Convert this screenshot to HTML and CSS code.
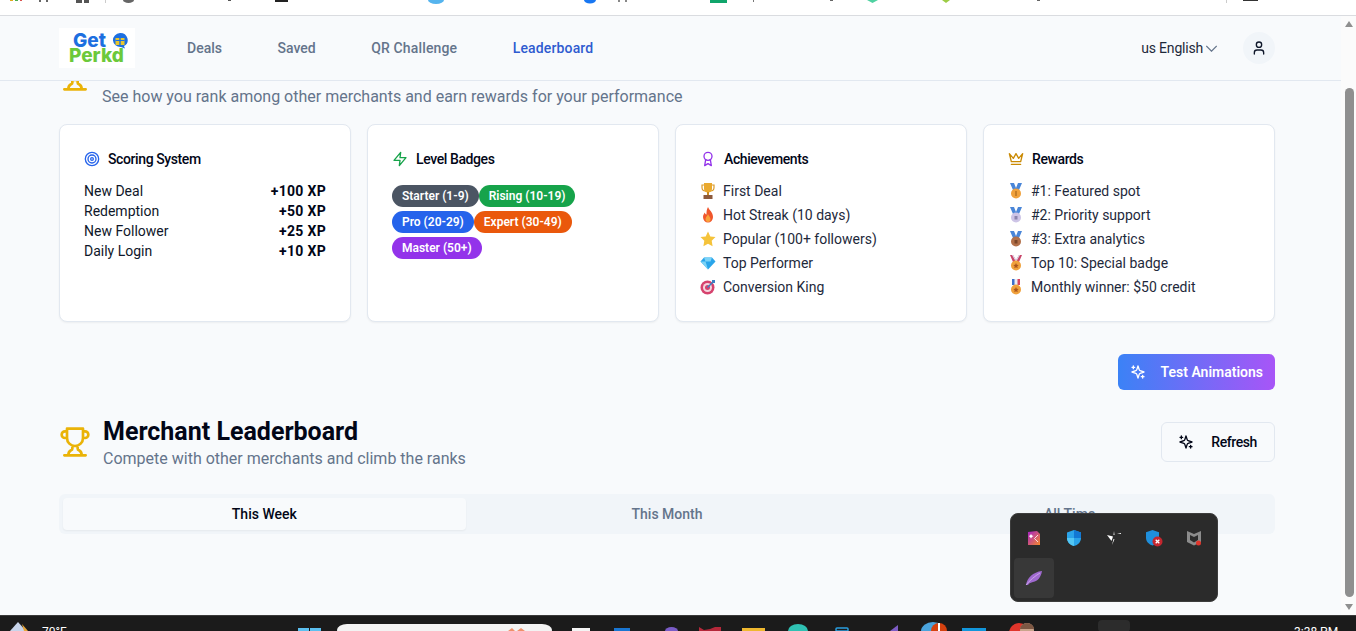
FILE: index.html
```html
<!DOCTYPE html>
<html lang="en">
<head>
    <meta charset="UTF-8">
    <meta name="viewport" content="width=device-width, initial-scale=1.0">
    <title>GetPerkd - Leaderboard</title>
    <link rel="stylesheet" href="styles.css">
</head>
<body>

<div class="screen">
    <!-- bottom edge of the browser toolbar -->
    <div class="browser-strip">
        <svg width="1356" height="15" viewBox="0 0 1356 15">
            <rect x="10" y="0" width="3" height="1" fill="#e0a81c"/><rect x="15" y="0" width="3" height="1" fill="#4caf50"/><rect x="20" y="0" width="2" height="1" fill="#d9534f"/>
            <rect x="39" y="0" width="2" height="2" fill="#666"/><rect x="46" y="0" width="2" height="2" fill="#666"/>
            <rect x="76" y="0" width="6" height="3" fill="#555"/><rect x="84" y="0" width="5" height="3" fill="#555"/>
            <rect x="105" y="0" width="1" height="3" fill="#ccc"/>
            <path d="M123 0h11a5.500 3 0 0 1-11 0z" fill="#666"/>
            <rect x="228" y="0" width="3" height="1" fill="#555"/>
            <rect x="275" y="0" width="13" height="2" fill="#222"/>
            <path d="M428 0h16a8 4 0 0 1-16 0z" fill="#55b4ee"/>
            <path d="M584 0h12a6 3.500 0 0 1-12 0z" fill="#1877f2"/>
            <rect x="618" y="0" width="2" height="2" fill="#888"/><rect x="625" y="0" width="2" height="2" fill="#888"/>
            <rect x="710" y="0" width="17" height="3" fill="#10a56b"/>
            <rect x="753" y="0" width="1" height="2" fill="#777"/>
            <rect x="830" y="0" width="3" height="1" fill="#666"/>
            <path d="M867 0h11l-5.500 3z" fill="#4fd1a1"/>
            <path d="M942 0h8l-4 3z" fill="#9ccc45"/>
            <rect x="1037" y="0" width="3" height="1" fill="#666"/>
            <rect x="1226" y="0" width="1" height="3" fill="#ccc"/>
            <rect x="1243" y="0" width="15" height="1" fill="#333"/>
        </svg>
    </div>

    <div class="viewport">
        <div class="page">
            <nav class="navbar">
                <div class="nav-left">
                    <div class="logo">
                        <div class="logo-top">
                            <span class="logo-get">Get</span>
                            <svg width="16" height="16" viewBox="0 0 16 16">
                                <path d="M8 0a7.500 7 0 0 1 4 13l1 2.500-4-1.500A7.500 7 0 1 1 8 0z" fill="#1d6fe0"/>
                                <rect x="3.500" y="5" width="9" height="7" fill="#e8c62e"/>
                                <rect x="7.300" y="3" width="1.400" height="9" fill="#1d6fe0"/>
                                <rect x="3.500" y="7" width="9" height="1" fill="#1d6fe0"/>
                            </svg>
                        </div>
                        <span class="logo-perkd">Perkd</span>
                    </div>
                    <a class="nav-link" href="#">Deals</a>
                    <a class="nav-link" href="#">Saved</a>
                    <a class="nav-link nav-wide" href="#">QR Challenge</a>
                    <a class="nav-link nav-active" href="#">Leaderboard</a>
                </div>
                <div class="nav-right">
                    <div class="lang">
                        <span>us English</span>
                        <svg class="lang-arrow" width="11" height="7" viewBox="6 8 12 8" fill="none" stroke="#64748b" stroke-width="1.500"><path d="m6 9 6 6 6-6"/></svg>
                    </div>
                    <div class="avatar">
                        <svg width="16" height="16" viewBox="0 0 24 24" fill="none" stroke="#0f172a" stroke-width="2" stroke-linecap="round" stroke-linejoin="round"><circle cx="12" cy="7" r="4"/><path d="M19 21v-2a4 4 0 0 0-4-4H9a4 4 0 0 0-4 4v2"/></svg>
                    </div>
                </div>
            </nav>

            <main class="content">
                <div class="rank-head">
                    <svg class="trophy trophy-top" viewBox="0 0 24 24"><use href="#trophy"/></svg>
                    <p class="subtitle">See how you rank among other merchants and earn rewards for your performance</p>
                </div>

                <div class="cards">
                    <section class="card">
                        <h3 class="card-title">
                            <svg class="card-icon" viewBox="0 0 24 24" stroke="#2563eb"><circle cx="12" cy="12" r="10"/><circle cx="12" cy="12" r="6"/><circle cx="12" cy="12" r="2"/></svg>
                            Scoring System
                        </h3>
                        <ul class="score-list">
                            <li><span>New Deal</span><b>+100 XP</b></li>
                            <li><span>Redemption</span><b>+50 XP</b></li>
                            <li><span>New Follower</span><b>+25 XP</b></li>
                            <li><span>Daily Login</span><b>+10 XP</b></li>
                        </ul>
                    </section>

                    <section class="card">
                        <h3 class="card-title">
                            <svg class="card-icon" viewBox="0 0 24 24" stroke="#16a34a"><polygon points="13 2 3 14 12 14 11 22 21 10 12 10 13 2"/></svg>
                            Level Badges
                        </h3>
                        <div class="badges">
                            <span class="badge badge-gray">Starter (1-9)</span>
                            <span class="badge badge-green">Rising (10-19)</span>
                            <span class="badge badge-blue">Pro (20-29)</span>
                            <span class="badge badge-orange">Expert (30-49)</span>
                            <span class="badge badge-purple">Master (50+)</span>
                        </div>
                    </section>

                    <section class="card">
                        <h3 class="card-title">
                            <svg class="card-icon" viewBox="0 0 24 24" stroke="#9333ea"><circle cx="12" cy="8" r="6"/><path d="M15.477 12.890 17 22l-5-3-5 3 1.523-9.110"/></svg>
                            Achievements
                        </h3>
                        <ul class="emoji-list">
                            <li>
                                <svg class="emoji" viewBox="0 0 16 16"><path d="M2 2h12v2.500a3.500 3.500 0 0 1-3.500 3.500h-5A3.500 3.500 0 0 1 2 4.500z" fill="none" stroke="#d99a2b" stroke-width="1.200"/><path d="M4 0h8v5.500a4 4 0 0 1-8 0z" fill="#eaa92e"/><rect x="7" y="9" width="2" height="3" fill="#c98a20"/><rect x="3.500" y="12" width="9" height="4" fill="#8d5a3c"/></svg>
                                First Deal
                            </li>
                            <li>
                                <svg class="emoji" viewBox="0 0 16 16"><path d="M8 0c1 3 5 5 5 10a5 5.500 0 0 1-10 0c0-2 1-3.500 2-4.500 0 1 .5 2 1.500 2C6.500 5 6.500 2.500 8 0z" fill="#f0562c"/><path d="M8 7c.5 2 2.500 3 2.500 5a2.500 3 0 0 1-5 0c0-2 2-3 2.500-5z" fill="#f9a13a"/></svg>
                                Hot Streak (10 days)
                            </li>
                            <li>
                                <svg class="emoji" viewBox="0 0 16 16"><path d="m8 .5 2.300 4.900 5.200.7-3.800 3.700.9 5.400L8 12.700l-4.600 2.500.9-5.400L.5 6.100l5.200-.7z" fill="#f5c33b"/></svg>
                                Popular (100+ followers)
                            </li>
                            <li>
                                <svg class="emoji" viewBox="0 0 16 16"><path d="M4 2.500h8l3.500 4L8 14.500.5 6.500z" fill="#29a5ea"/><path d="M4 2.500h8l-1.500 4h-5zM.5 6.500h5L8 14.500z" fill="#7bd3f7"/></svg>
                                Top Performer
                            </li>
                            <li>
                                <svg class="emoji" viewBox="0 0 16 16"><circle cx="7.500" cy="8.500" r="7" fill="#d6436e"/><circle cx="7.500" cy="8.500" r="4.500" fill="#f4d6de"/><circle cx="7.500" cy="8.500" r="2.500" fill="#d6436e"/><path d="m7.500 8.500 6-6" stroke="#3b82c4" stroke-width="1.500"/><path d="M12 1h3v3h-2l-1-1z" fill="#3b82c4"/></svg>
                                Conversion King
                            </li>
                        </ul>
                    </section>

                    <section class="card">
                        <h3 class="card-title">
                            <svg class="card-icon" viewBox="0 0 24 24" stroke="#ca8a04"><path d="m2 4 3 12h14l3-12-6 7-4-7-4 7-6-7zm3 16h14"/></svg>
                            Rewards
                        </h3>
                        <ul class="emoji-list">
                            <li>
                                <svg class="emoji" viewBox="0 0 16 16"><path d="M2 0h4l2 5 2-5h4l-3 7H5z" fill="#4a86d8"/><circle cx="8" cy="10.500" r="5" fill="#f0a13c"/><rect x="7.400" y="8" width="1.200" height="5" fill="#a9671c"/></svg>
                                #1: Featured spot
                            </li>
                            <li>
                                <svg class="emoji" viewBox="0 0 16 16"><path d="M2 0h4l2 5 2-5h4l-3 7H5z" fill="#4a86d8"/><circle cx="8" cy="10.500" r="5" fill="#cdc4e6"/><rect x="6.500" y="9" width="3" height="3.500" fill="#8c84ad"/></svg>
                                #2: Priority support
                            </li>
                            <li>
                                <svg class="emoji" viewBox="0 0 16 16"><path d="M2 0h4l2 5 2-5h4l-3 7H5z" fill="#4a86d8"/><circle cx="8" cy="10.500" r="5" fill="#b2704a"/><rect x="6.500" y="9" width="3" height="3.500" fill="#7a4629"/></svg>
                                #3: Extra analytics
                            </li>
                            <li>
                                <svg class="emoji" viewBox="0 0 16 16"><path d="M2 0h3l3 5 3-5h3l-3 7H5z" fill="#c9446a"/><path d="M4 0h1l3 5 3-5h1L8 7z" fill="#dbe3f3"/><circle cx="8" cy="10.500" r="5" fill="#f0a13c"/><path d="m8 8 .8 1.800 1.900.2-1.400 1.300.4 1.900L8 12.200l-1.700 1 .4-1.900L5.300 10l1.900-.2z" fill="#a9541c"/></svg>
                                Top 10: Special badge
                            </li>
                            <li>
                                <svg class="emoji" viewBox="0 0 16 16"><rect x="4" y="0" width="8" height="6" fill="#e9ecf6"/><rect x="4" y="0" width="2.500" height="6" fill="#3d6fc9"/><rect x="9.500" y="0" width="2.500" height="6" fill="#d9455f"/><circle cx="8" cy="10.500" r="5" fill="#f0a13c"/><path d="m8 8 .8 1.800 1.900.2-1.400 1.300.4 1.900L8 12.200l-1.700 1 .4-1.900L5.300 10l1.900-.2z" fill="#a9541c"/></svg>
                                Monthly winner: $50 credit
                            </li>
                        </ul>
                    </section>
                </div>

                <div class="test-row">
                    <button class="btn-test">
                        <svg class="btn-icon" viewBox="0 0 24 24"><use href="#sparkles"/></svg>
                        Test Animations
                    </button>
                </div>

                <div class="board-head">
                    <div class="board-title">
                        <svg class="trophy" viewBox="0 0 24 24"><use href="#trophy"/></svg>
                        <div>
                            <h2>Merchant Leaderboard</h2>
                            <p class="subtitle">Compete with other merchants and climb the ranks</p>
                        </div>
                    </div>
                    <button class="btn-refresh">
                        <svg class="btn-icon" viewBox="0 0 24 24"><use href="#sparkles"/></svg>
                        Refresh
                    </button>
                </div>

                <div class="tabs">
                    <div class="tab tab-active">This Week</div>
                    <div class="tab">This Month</div>
                    <div class="tab">All Time</div>
                </div>
            </main>
        </div>

        <div class="scrollbar">
            <span class="arrow-up"></span>
            <span class="thumb"></span>
            <span class="arrow-down"></span>
        </div>
    </div>

    <footer class="taskbar">
        <svg class="taskbar-art" width="1356" height="15" viewBox="0 0 1356 15">
            <path d="M10 15l8-9 8 9z" fill="#c8d4ea"/><path d="M22 8l6 7h-4z" fill="#e7a53a"/>
            <rect x="298" y="12" width="11" height="3" fill="#5cc0f0"/><rect x="310" y="12" width="11" height="3" fill="#5cc0f0"/>
            <rect x="337" y="8" width="215" height="12" rx="10" fill="#f3f3f3"/>
            <path d="M508 15l4-3 3 3zM517 15l4-3 4 3z" fill="#f0906a"/>
            <rect x="572" y="12" width="18" height="3" fill="#f4f4f4"/>
            <rect x="614" y="12" width="16" height="3" fill="#1976d2"/>
            <path d="M665 15a6.500 4 0 0 1 13 0z" fill="#7a5cc7"/>
            <path d="M699 15v-4l5 3 6-1 5-2 6 0v4z" fill="#b5283a"/>
            <rect x="742" y="12" width="23" height="3" fill="#efb82f"/>
            <path d="M788 15a10 7 0 0 1 20 0z" fill="#2fc1b3"/>
            <rect x="836" y="12" width="12" height="3" rx="1" fill="none" stroke="#2a9fe0" stroke-width="1.500"/>
            <path d="M890 15l8-6v6z" fill="#7d5cc4"/>
            <path d="M921 15a12 9 0 0 1 24 0z" fill="#4aa3dc"/>
            <circle cx="939" cy="15" r="8" fill="#d5410f"/><rect x="938" y="7" width="2" height="8" fill="#fff"/>
            <rect x="962" y="12" width="24" height="3" fill="#1296db"/>
            <circle cx="1019" cy="17" r="10" fill="#e0352b"/>
            <circle cx="1027" cy="14" r="7" fill="#c9a58c"/><path d="M1020 13a7 6 0 0 1 14 0z" fill="#7d5844"/>
            <rect x="1098" y="4" width="32" height="12" rx="4" fill="#2c2c2c"/>
        </svg>
        <span class="weather">70°F</span>
        <span class="clock">3:38 PM</span>
    </footer>

    <!-- system tray overflow -->
    <div class="tray">
        <div class="tray-cell">
            <svg width="16" height="16" viewBox="0 0 16 16"><defs><linearGradient id="g1" x1="0" y1="0" x2="1" y2="1"><stop offset="0" stop-color="#a520c8"/><stop offset="1" stop-color="#f58a2c"/></linearGradient></defs><path d="M2 2l9-1 3 3v11H2z" fill="url(#g1)"/><path d="M5 4l1 1.500 1.500.5L6 7 5 8.500 4 7 2.800 6 4 5.500z" fill="#fff"/><path d="M12 5L8.500 8.500 12 12" fill="none" stroke="#fff" stroke-width=".8"/></svg>
        </div>
        <div class="tray-cell">
            <svg width="16" height="18" viewBox="0 0 16 18"><path d="M8 1l7 2.500V9c0 4-3 7-7 8-4-1-7-4-7-8V3.500z" fill="#2aa4ea"/><path d="M8 1l7 2.500V9H8z" fill="#1278d4"/><path d="M1 9h7v8c-4-1-7-4-7-8z" fill="#53c7f4"/></svg>
        </div>
        <div class="tray-cell">
            <svg width="16" height="16" viewBox="0 0 16 16"><path d="M1 5l6 1.500L5.500 11z" fill="#fff"/><path d="M8 1l.5 4h-1zM6 15l1.500-6 1 .3zM11 3.500l4-.5v1z" fill="#fff"/></svg>
        </div>
        <div class="tray-cell">
            <svg width="18" height="18" viewBox="0 0 18 18"><path d="M7.500 1l6.500 2.300V9c0 3.500-3 6.500-6.500 7.500C4 15.500 1 12.500 1 9V3.300z" fill="#1f8fdc"/><circle cx="12.500" cy="12.500" r="5" fill="#c4262e"/><path d="M10.700 10.700l3.600 3.600M14.300 10.700l-3.600 3.600" stroke="#fff" stroke-width="1.300"/></svg>
        </div>
        <div class="tray-cell">
            <svg width="16" height="16" viewBox="0 0 16 16"><path d="M1 1l7 3 7-3v11l-7 3.500L1 12z" fill="#8c8c8c"/><path d="M4 5l4 2 4-2v5l-4 2.500L4 10z" fill="#2b2b2b"/><circle cx="12.500" cy="13" r="2.500" fill="#e0352b"/></svg>
        </div>
        <div class="tray-cell tray-hover">
            <svg width="18" height="16" viewBox="0 0 18 16"><path d="M1 15C2 8 8 2 17 1c-1 6-4 10-9 11-2 .5-4 1-5 3z" fill="#a06ad0"/><path d="M1 15C5 10 10 6 15 3" stroke="#d5b6ee" stroke-width=".8" fill="none"/></svg>
        </div>
    </div>
</div>

<!-- shared icons -->
<svg class="icon-defs" width="0" height="0">
    <symbol id="trophy" viewBox="0 0 24 24">
        <path d="M6 9H4.500a2.500 2.500 0 0 1 0-5H6M18 9h1.500a2.500 2.500 0 0 0 0-5H18M4 22h16M10 14.660V17c0 .55-.47.98-.97 1.210C7.850 18.750 7 20.240 7 22M14 14.660V17c0 .55.47.98.97 1.210C16.150 18.750 17 20.240 17 22M18 2H6v7a6 6 0 0 0 12 0V2Z"/>
    </symbol>
    <symbol id="sparkles" viewBox="0 0 24 24">
        <path d="m12 3-1.912 5.813a2 2 0 0 1-1.275 1.275L3 12l5.813 1.912a2 2 0 0 1 1.275 1.275L12 21l1.912-5.813a2 2 0 0 1 1.275-1.275L21 12l-5.813-1.912a2 2 0 0 1-1.275-1.275L12 3ZM5 3v4M19 17v4M3 5h4M17 19h4"/>
    </symbol>
</svg>

</body>
</html>
```
FILE: styles.css
```css
* {
    box-sizing: border-box;
}
html, body {
    margin: 0;
    padding: 0;
    height: 100%;
    overflow: hidden;
}
body {
    font-family: Roboto, "Liberation Sans", sans-serif;
    font-size: 14px;
    line-height: 20px;
    color: #0f172a;
    background-color: #f8fafc;
}
.screen {
    position: relative;
    display: flex;
    flex-direction: column;
    height: 631px;
    overflow: hidden;
}
.icon-defs {
    position: absolute;
}

/* browser strip */
.browser-strip {
    flex: none;
    height: 16px;
    background-color: #ffffff;
    border-bottom: 1px solid #dadce0;
}
.browser-strip svg {
    display: block;
}

.viewport {
    flex: 1;
    display: flex;
    min-height: 0;
}
.page {
    flex: 1;
    min-width: 0;
    overflow: hidden;
    background-color: #f8fafc;
}

/* navbar */
.navbar {
    position: relative;
    z-index: 2;
    display: flex;
    align-items: center;
    justify-content: space-between;
    height: 65px;
    padding: 0 66px 0 59px;
    background-color: #f8fafc;
    border-bottom: 1px solid #e2e8f0;
}
.nav-left {
    display: flex;
    align-items: center;
}
.logo {
    width: 76px;
    height: 40px;
    margin-right: 52px;
    padding: 5px 0 0 10px;
    background-color: #ffffff;
    font-family: Inter, sans-serif;
    font-weight: 800;
}
.logo-top {
    display: flex;
    align-items: center;
    gap: 6px;
    height: 15px;
    padding-left: 4px;
}
.logo-get {
    display: block;
    height: 15px;
    font-size: 19px;
    line-height: 15px;
    color: #1d6fe0;
}
.logo-perkd {
    display: block;
    height: 15px;
    font-size: 19px;
    line-height: 15px;
    color: #6cc93a;
}
.nav-link {
    margin-right: 55.5px;
    font-weight: 500;
    color: #64748b;
    text-decoration: none;
}
.nav-wide {
    letter-spacing: 0.15px;
}
.nav-active {
    margin-right: 0;
    letter-spacing: 0.15px;
    color: #2f5bd0;
}
.nav-right {
    display: flex;
    align-items: center;
    gap: 26px;
}
.lang {
    display: flex;
    align-items: center;
    gap: 3px;
    letter-spacing: -0.2px;
    color: #1e293b;
}
.avatar {
    display: flex;
    align-items: center;
    justify-content: center;
    width: 32px;
    height: 32px;
    border-radius: 50%;
    background-color: #f1f5f9;
}

/* main */
.content {
    padding: 0 66px 0 59px;
}
.rank-head {
    display: flex;
    gap: 11px;
    padding-top: 4px;
    margin-bottom: 16px;
}
.trophy {
    flex: none;
    width: 32px;
    height: 32px;
    fill: none;
    stroke: #eab308;
    stroke-width: 2;
    stroke-linecap: round;
    stroke-linejoin: round;
}
.trophy-top {
    margin-top: -25px;
}
.subtitle {
    margin: 0;
    font-size: 16px;
    line-height: 24px;
    color: #64748b;
}

/* cards */
.cards {
    display: grid;
    grid-template-columns: repeat(4, 1fr);
    gap: 16px;
    margin-top: -1px;
}
.card {
    height: 198px;
    padding: 24px;
    background-color: #ffffff;
    border: 1px solid #e2e8f0;
    border-radius: 8px;
    box-shadow: 0 1px 2px rgba(0, 0, 0, 0.05);
}
.card-title {
    display: flex;
    align-items: center;
    gap: 8px;
    margin: 0 0 12px;
    font-size: 14px;
    line-height: 20px;
    font-weight: 500;
    letter-spacing: -0.4px;
    color: #020617;
}
.card-icon {
    flex: none;
    width: 16px;
    height: 16px;
    fill: none;
    stroke-width: 2;
    stroke-linecap: round;
    stroke-linejoin: round;
}
.score-list, .emoji-list {
    margin: 0;
    padding: 0;
    list-style: none;
}
.score-list li {
    display: flex;
    justify-content: space-between;
}
.score-list b {
    font-weight: 700;
    letter-spacing: 0.3px;
    color: #020617;
}
.emoji-list li {
    display: flex;
    align-items: center;
    gap: 7px;
    margin-bottom: 4px;
    color: #1e293b;
}
.emoji {
    flex: none;
    width: 16px;
    height: 16px;
}
.badges {
    display: flex;
    flex-wrap: wrap;
    row-gap: 4px;
    padding-top: 4px;
}
.badge {
    height: 22px;
    padding: 0 10px;
    border-radius: 11px;
    font-size: 12px;
    line-height: 22px;
    font-weight: 600;
    color: #ffffff;
}
.badge-gray { background-color: #4b5563; }
.badge-green { background-color: #16a34a; }
.badge-blue { background-color: #2563eb; }
.badge-orange { background-color: #ea580c; }
.badge-purple { background-color: #9333ea; }

/* buttons */
.test-row {
    display: flex;
    justify-content: flex-end;
    margin-top: 32px;
}
button {
    display: flex;
    align-items: center;
    font-family: inherit;
    font-size: 14px;
    cursor: pointer;
}
.btn-icon {
    flex: none;
    width: 16px;
    height: 16px;
    fill: none;
    stroke: currentColor;
    stroke-width: 2;
    stroke-linecap: round;
    stroke-linejoin: round;
}
.btn-test {
    gap: 15px;
    height: 36px;
    padding: 0 12px;
    border: none;
    border-radius: 6px;
    font-weight: 600;
    color: #ffffff;
    background: linear-gradient(to right, #3b82f6, #a855f7);
}
.board-head {
    display: flex;
    align-items: center;
    justify-content: space-between;
    margin-top: 24px;
}
.board-title {
    display: flex;
    align-items: center;
    gap: 12px;
}
.board-title h2 {
    margin: 0;
    padding-top: 3px;
    font-size: 25px;
    line-height: 30px;
    font-weight: 700;
    color: #020617;
}
.board-title .subtitle {
    margin-bottom: -1px;
}
.btn-refresh {
    gap: 17px;
    height: 40px;
    padding: 0 17px 0 16px;
    border: 1px solid #e2e8f0;
    border-radius: 6px;
    font-weight: 500;
    letter-spacing: -0.4px;
    color: #020617;
    background-color: #f8fafc;
}

/* tabs */
.tabs {
    display: grid;
    grid-template-columns: repeat(3, 1fr);
    margin-top: 24px;
    padding: 4px;
    height: 40px;
    border-radius: 6px;
    background-color: #f1f5f9;
}
.tab {
    text-align: center;
    font-weight: 500;
    line-height: 32px;
    color: #64748b;
    border-radius: 4px;
}
.tab-active {
    color: #020617;
    background-color: #f8fafc;
    box-shadow: 0 1px 2px rgba(0, 0, 0, 0.05);
}

/* scrollbar */
.scrollbar {
    position: relative;
    flex: none;
    width: 15px;
    background-color: #fbfbfb;
}
.thumb {
    position: absolute;
    top: 72px;
    left: 4px;
    width: 9px;
    height: 509px;
    border-radius: 5px;
    background-color: #8f8f8f;
}
.arrow-up, .arrow-down {
    position: absolute;
    left: 4px;
    width: 0;
    height: 0;
    border-left: 4px solid transparent;
    border-right: 4px solid transparent;
}
.arrow-up {
    top: 5px;
    border-bottom: 6px solid #8f8f8f;
}
.arrow-down {
    top: 588px;
    border-top: 6px solid #8f8f8f;
}

/* taskbar */
.taskbar {
    position: relative;
    flex: none;
    height: 16px;
    background-color: #1b1b1b;
    border-top: 1px solid #3a3a3a;
    overflow: hidden;
    color: #ffffff;
    font-size: 12px;
    line-height: 16px;
}
.taskbar-art {
    position: absolute;
    top: 0;
    left: 0;
}
.weather {
    position: absolute;
    top: 8px;
    left: 42px;
}
.clock {
    position: absolute;
    top: 8px;
    left: 1294px;
}

/* tray popup */
.tray {
    position: absolute;
    top: 513px;
    left: 1010px;
    display: grid;
    grid-template-columns: repeat(5, 40px);
    grid-auto-rows: 40px;
    width: 208px;
    height: 89px;
    padding: 4px 3px;
    border: 1px solid #3d3d3d;
    border-radius: 8px;
    background-color: #2b2b2b;
}
.tray-cell {
    display: flex;
    align-items: center;
    justify-content: center;
    border-radius: 4px;
}
.tray-hover {
    background-color: #383838;
}
```
